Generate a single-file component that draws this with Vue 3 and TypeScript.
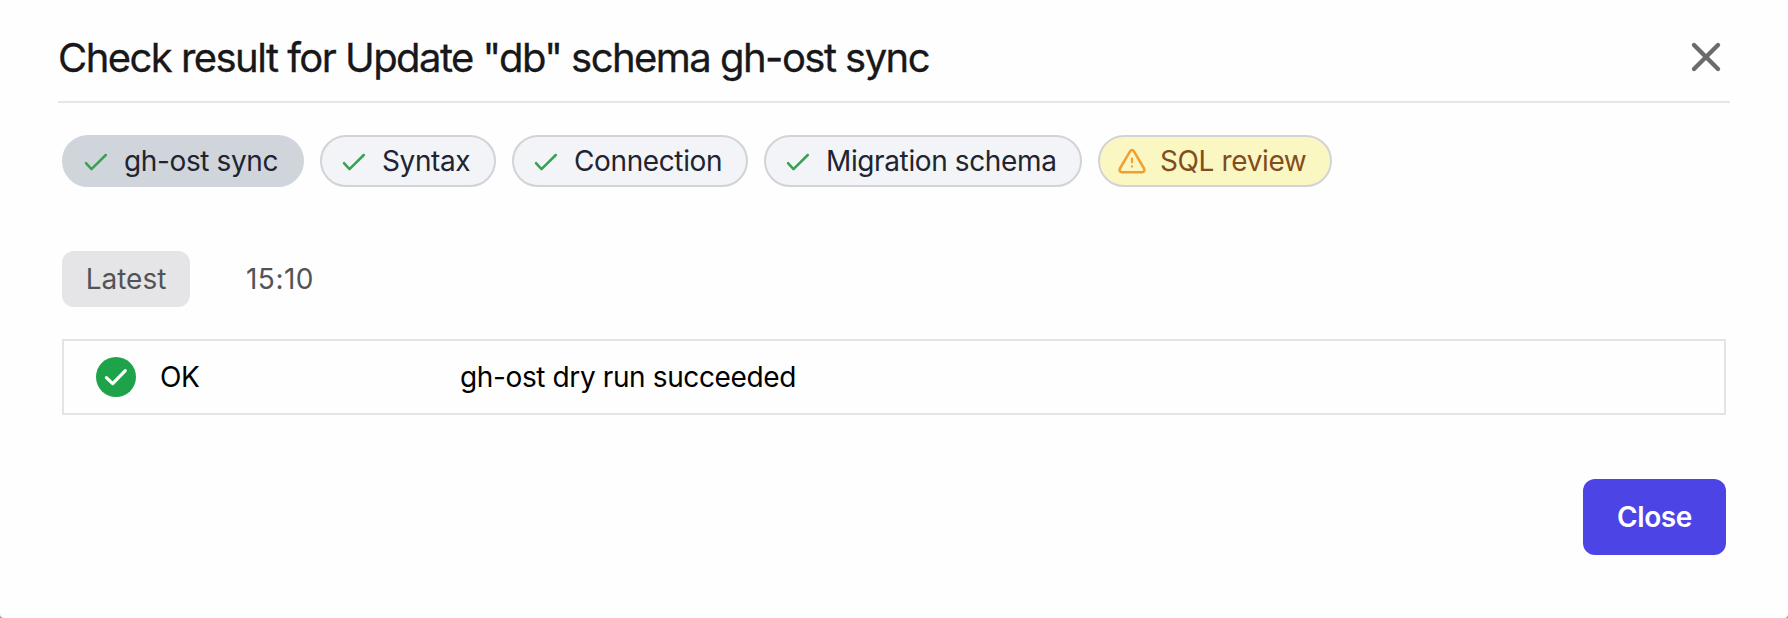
<script setup lang="ts">
interface CheckChip {
  key: string
  label: string
  status: 'success' | 'warn'
}

const title = 'Check result for Update "db" schema gh-ost sync'
const selected = 'sync'
const chips: CheckChip[] = [
  { key: 'sync', label: 'gh-ost sync', status: 'success' },
  { key: 'syntax', label: 'Syntax', status: 'success' },
  { key: 'connection', label: 'Connection', status: 'success' },
  { key: 'migration', label: 'Migration schema', status: 'success' },
  { key: 'review', label: 'SQL review', status: 'warn' },
]
</script>

<template>
  <div class="backdrop">
    <section class="modal">
      <header class="header">
        <h1 class="title"><span>{{ title }}</span></h1>
        <button class="dismiss" aria-label="Dismiss">
          <svg width="32" height="32" viewBox="0 0 32 32">
            <path d="M4 4l24 24M28 4L4 28" fill="none" stroke="#6b6b6d" stroke-width="4.4" stroke-linecap="round" />
          </svg>
        </button>
      </header>

      <div class="chips">
        <button
          v-for="chip in chips"
          :key="chip.key"
          class="chip"
          :class="[chip.key, chip.status, { active: chip.key === selected }]"
        >
          <svg v-if="chip.status === 'success'" class="chip-icon" viewBox="0 0 28 28">
            <path d="M4 16.2l5.5 6L23.8 8" fill="none" stroke="#38a153" stroke-width="2.5" stroke-linecap="round" stroke-linejoin="round" />
          </svg>
          <svg v-else class="chip-icon" viewBox="0 0 28 28">
            <path d="M11.9 4.7Q14 1.4 16.1 4.7L26 21.4Q27.4 25 23.8 25.2H4.2Q.6 25 2 21.4Z" fill="none" stroke="#f1a02f" stroke-width="2.6" stroke-linejoin="round" />
            <path d="M14 11.5v3.8M14 19.4v.2" fill="none" stroke="#f1a02f" stroke-width="2.2" stroke-linecap="round" />
          </svg>
          <span>{{ chip.label }}</span>
        </button>
      </div>

      <div class="runs">
        <button class="run current"><span>Latest</span></button>
        <button class="run"><span class="time">15:10</span></button>
      </div>

      <div class="result">
        <svg class="result-icon" viewBox="0 0 40 40">
          <circle cx="20" cy="20" r="20" fill="#1ea34a" />
          <path d="M10.4 20.6l6.3 6L29.3 13.6" fill="none" stroke="#fff" stroke-width="3.2" stroke-linecap="round" stroke-linejoin="round" />
        </svg>
        <span class="state">OK</span>
        <span class="message">gh-ost dry run succeeded</span>
      </div>

      <footer class="footer">
        <button class="close"><span>Close</span></button>
      </footer>
    </section>
  </div>
</template>

<style>
body {
  margin: 0;
  overflow: hidden;
}
</style>

<style scoped>
.backdrop {
  height: 618px;
  background: #9b9b9c;
  font-family: Inter, "Liberation Sans", sans-serif;
  font-size: 28px;
  letter-spacing: -0.38px;
}

.modal {
  box-sizing: border-box;
  height: 618px;
  padding: 0 58px;
  border-radius: 0 0 4px 4px;
  background: #fefefe;
}

button {
  box-sizing: border-box;
  margin: 0;
  border: 0;
  padding: 0;
  background: none;
  color: inherit;
  font: inherit;
  letter-spacing: inherit;
  white-space: nowrap;
}

.header {
  box-sizing: border-box;
  display: flex;
  align-items: center;
  justify-content: space-between;
  height: 103px;
  padding: 13px 8px 0 0;
  border-bottom: 2px solid #e6e6e9;
}

.title {
  margin: 0;
  color: #18181a;
  font-size: 40px;
  font-weight: 400;
  letter-spacing: -1.55px;
  -webkit-text-stroke: 0.3px currentColor;
  white-space: nowrap;
}

.dismiss svg {
  display: block;
}

.chips {
  display: flex;
  gap: 16px;
  margin: 32px 4px 0;
}

.chip {
  display: flex;
  align-items: center;
  height: 52px;
  padding-left: 18px;
  border: 2px solid #d2d3d7;
  border-radius: 26px;
  background: #f3f4f7;
  color: #202430;
}

.chip-icon {
  flex: none;
  width: 28px;
  height: 28px;
  margin-right: 14px;
}

.chip.sync {
  width: 242px;
}

.chip.syntax {
  width: 176px;
}

.chip.connection {
  width: 236px;
}

.chip.migration {
  width: 318px;
}

.chip.review {
  width: 234px;
}

.chip.active {
  border-color: #d0d5dc;
  background: #d0d5dc;
}

.chip.warn {
  background: #fbf7c3;
  color: #824d1c;
}

.runs {
  display: flex;
  gap: 26px;
  margin: 64px 4px 0;
  color: #535357;
  letter-spacing: 0;
}

.run {
  width: 128px;
  height: 56px;
  border-radius: 12px;
  text-align: center;
}

.run.current {
  background: #e5e5e8;
}

.time {
  letter-spacing: 0.5px;
}

.result {
  box-sizing: border-box;
  display: flex;
  align-items: center;
  height: 76px;
  margin: 32px 4px 0;
  padding-left: 32px;
  border: 2px solid #e4e4e8;
  color: #000;
  white-space: nowrap;
}

.result-icon {
  width: 40px;
  height: 40px;
  margin-right: 24px;
}

.state {
  width: 300px;
}

.footer {
  display: flex;
  justify-content: flex-end;
  margin: 64px 4px 0;
}

.close {
  width: 143px;
  height: 76px;
  border-radius: 12px;
  background: #4d44e6;
  color: #fff;
  font-weight: 600;
}
</style>
